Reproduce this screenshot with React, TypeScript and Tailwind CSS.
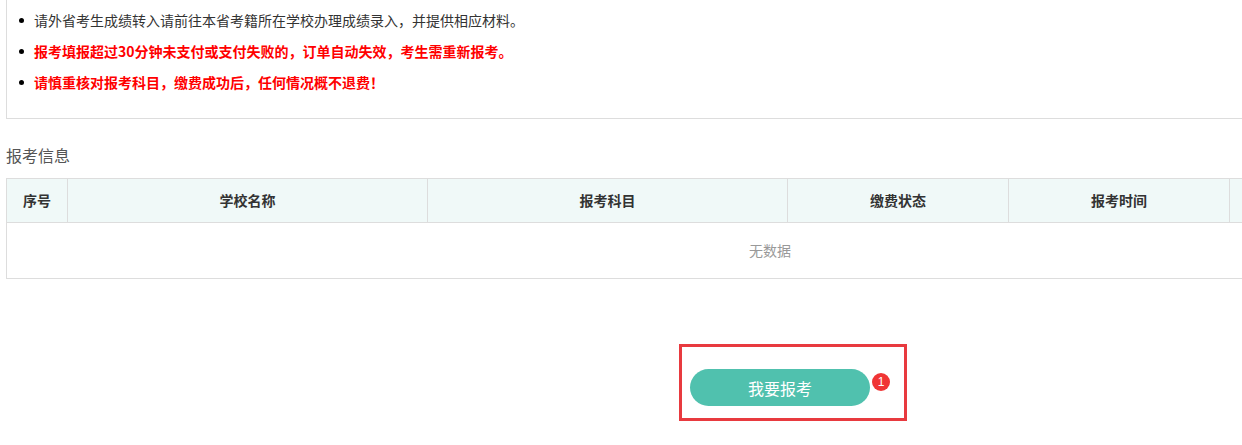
const notices = [
  { text: '请外省考生成绩转入请前往本省考籍所在学校办理成绩录入，并提供相应材料。', warn: false },
  { text: '报考填报超过30分钟未支付或支付失败的，订单自动失效，考生需重新报考。', warn: true },
  { text: '请慎重核对报考科目，缴费成功后，任何情况概不退费！', warn: true },
];

const columns = [
  { title: '序号', width: 'w-[61px]' },
  { title: '学校名称', width: 'w-[360px]' },
  { title: '报考科目', width: 'w-[360px]' },
  { title: '缴费状态', width: 'w-[221px]' },
  { title: '报考时间', width: 'w-[221px]' },
  { title: '', width: 'flex-1' },
];

export default function App() {
  return (
    <div
      className="w-[1242px] h-[445px] overflow-hidden bg-white"
      style={{ fontFamily: '"Noto Sans CJK SC", "Noto Sans", sans-serif' }}
    >
      <div className="ml-[6px] w-[1574px]">
        {/* Notice box */}
        <div className="border-x border-b border-[#dddddd] pt-[10px] pb-[26px]">
          <ul className="flex flex-col gap-[11px]">
            {notices.map((n) => (
              <li key={n.text} className="flex items-center h-[20px]">
                <span className="ml-[12px] mr-[10px] w-[5px] h-[5px] rounded-full bg-black shrink-0" />
                <span
                  className={
                    n.warn
                      ? 'text-[14px] leading-[20px] font-bold text-[#ff0000]'
                      : 'text-[14px] leading-[20px] text-[#333333]'
                  }
                >
                  {n.text}
                </span>
              </li>
            ))}
          </ul>
        </div>

        {/* Title */}
        <div className="mt-[24px] mb-[11px] text-[16px] leading-[24px] text-[#555555]">报考信息</div>

        {/* Table */}
        <div className="border border-[#dddddd]">
          <div className="flex h-[44px] bg-[#f0f9f8] border-b border-[#dddddd]">
            {columns.map((c, i) => (
              <div
                key={i}
                className={`${c.width} flex items-center justify-center text-[14px] font-bold text-[#333333] ${
                  i < columns.length - 1 ? 'border-r border-[#dddddd]' : ''
                }`}
              >
                {c.title}
              </div>
            ))}
          </div>
          <div className="h-[55px] flex items-center pl-[742px] text-[14px] text-[#999999]">无数据</div>
        </div>

        {/* Action */}
        <div className="mt-[65px] flex justify-center">
          <div className="flex items-start border-[3px] border-[#e83a3f] pt-[22px] pb-[12px] pl-[8px] pr-[14px]">
            <button className="w-[180px] h-[37px] rounded-full bg-[#50c1ae] text-white text-[16px]">
              我要报考
            </button>
            <span
              className="mt-[4px] ml-[2px] w-[18px] h-[18px] rounded-full bg-[#f03535] text-white text-[12px] leading-[18px] text-center"
              style={{ fontFamily: '"Liberation Sans", Arial, sans-serif' }}
            >
              1
            </span>
          </div>
        </div>
      </div>
    </div>
  );
}
